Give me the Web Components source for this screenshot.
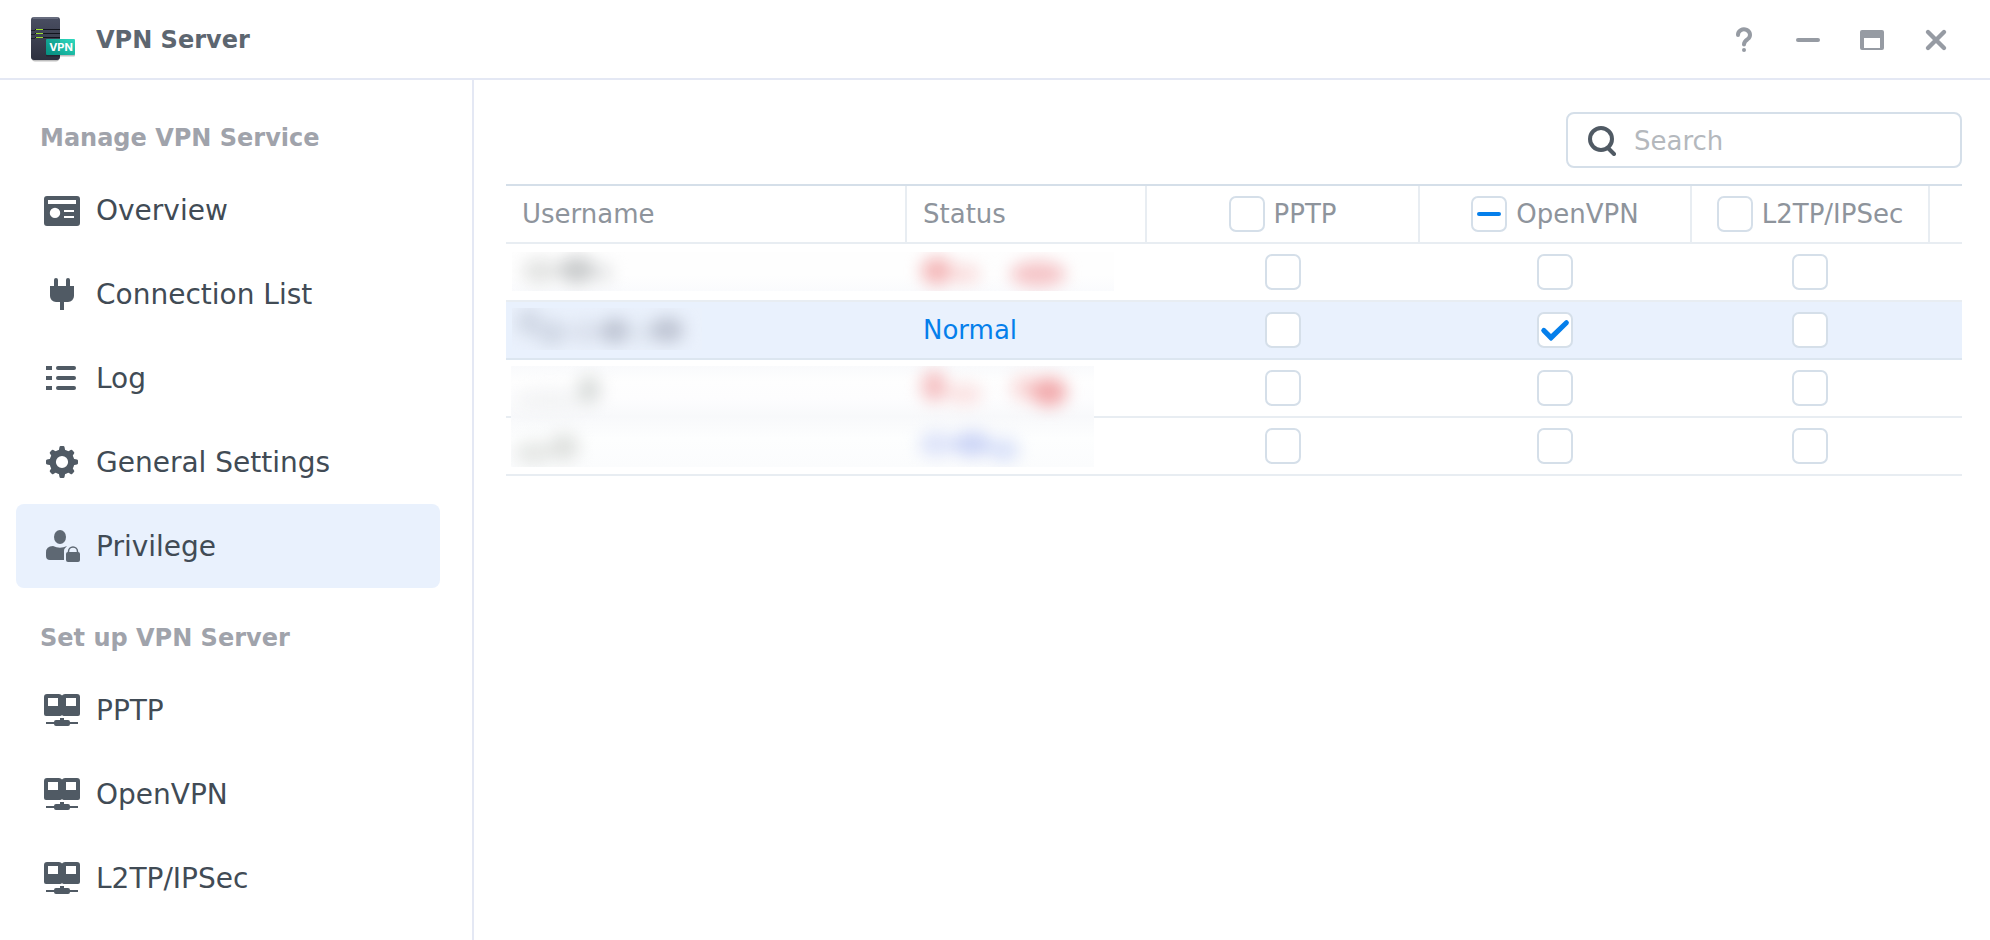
<!DOCTYPE html>
<html lang="en">
<head>
<meta charset="utf-8">
<title>VPN Server</title>
<style>
  html, body {
    height: 100%;
  }
  body {
    margin: 0;
    background: #fff;
    color: #414b55;
    font-family: Verdana, "DejaVu Sans", sans-serif;
    font-size: 28px;
    --line: #e4e8f4;
    --grid: #e8edf2;
    --field: #d5dfe9;
    --muted: #a0a3ab;
    --accent: #057feb;
    --selected: #e9f1fd;
  }
</style>
</head>
<body>
<vpn-window>
  <title-bar slot="header">VPN Server</title-bar>
  <nav-group slot="nav" heading="Manage VPN Service">
    <nav-item icon="overview">Overview</nav-item>
    <nav-item icon="plug">Connection List</nav-item>
    <nav-item icon="list">Log</nav-item>
    <nav-item icon="gear">General Settings</nav-item>
    <nav-item icon="user" active>Privilege</nav-item>
  </nav-group>
  <nav-group slot="nav" heading="Set up VPN Server">
    <nav-item icon="screens">PPTP</nav-item>
    <nav-item icon="screens">OpenVPN</nav-item>
    <nav-item icon="screens">L2TP/IPSec</nav-item>
  </nav-group>
  <search-field placeholder="Search"></search-field>
  <privilege-table></privilege-table>
</vpn-window>

<script>
const ICONS = {
  overview: `
    <path fill-rule="evenodd" d="M3 4h30a3 3 0 0 1 3 3v24a3 3 0 0 1-3 3H3a3 3 0 0 1-3-3V7a3 3 0 0 1 3-3z
      M4 8v4h28V8z M11 15.7a5.2 5.2 0 1 0 0 10.4a5.2 5.2 0 1 0 0-10.4z M20 18v2h10v-2z M20 24v2h10v-2z"/>`,
  plug: `
    <rect x="10" y="2" width="4" height="12" rx="2"/>
    <rect x="22" y="2" width="4" height="12" rx="2"/>
    <path d="M6 10h24v10a6 6 0 0 1-6 6h-4v8h-4v-8h-4a6 6 0 0 1-6-6z"/>`,
  list: `
    <path d="M2 6h6v4H2z M2 16h6v4H2z M2 26h6v4H2z"/>
    <rect x="12" y="6" width="20" height="4" rx="2"/>
    <rect x="12" y="16" width="20" height="4" rx="2"/>
    <rect x="12" y="26" width="20" height="4" rx="2"/>`,
  gear: `
    <circle cx="18" cy="18" r="9.300" fill="none" stroke="currentColor" stroke-width="6.400"/>
    <path d="M14.500 8l1-5q.2-1 1.200-1h2.600q1 0 1.200 1l1 5z"/>
    <path d="M14.500 28l1 5q.2 1 1.200 1h2.600q1 0 1.200-1l1-5z"/>
    <path d="M8 14.500l-5 1q-1 .2-1 1.200v2.600q0 1 1 1.200l5 1z"/>
    <path d="M28 14.500l5 1q1 .2 1 1.200v2.600q0 1-1 1.200l-5 1z"/>
    <g transform="rotate(45 18 18)">
      <path d="M14.500 8l1-4.600q.2-1 1.200-1h2.600q1 0 1.200 1l1 4.600z"/>
      <path d="M14.500 28l1 4.600q.2 1 1.200 1h2.600q1 0 1.200-1l1-4.600z"/>
      <path d="M8 14.500l-4.600 1q-1 .2-1 1.200v2.600q0 1 1 1.200l4.600 1z"/>
      <path d="M28 14.500l4.600 1q1 .2 1 1.200v2.600q0 1-1 1.200l-4.600 1z"/>
    </g>`,
  user: `
    <ellipse cx="16" cy="9" rx="6" ry="7"/>
    <path d="M9 18q7 3.500 14 0q-3 2.500-3 5v9H6q-4 0-4-4v-3.500Q2 18 9 18z"/>
    <rect x="22" y="24" width="14" height="10" rx="2"/>
    <path d="M24.500 25v-1.500a4.500 4.500 0 0 1 9 0V25" fill="none" stroke="currentColor" stroke-width="1.500"/>`,
  screens: `
    <path fill-rule="evenodd" d="M3 2h12q2 0 3 1.500Q19 2 21 2h12q3 0 3 3v17q0 2-2 2H20q-1.500 0-2-1q-.5 1-2 1H2q-2 0-2-2V5q0-3 3-3z
      M4 6v8h10V6z M22 6v8h10V6z"/>
    <path d="M16 26h4v2h4q2 0 2 2h8v2h-8q0 2-2 2H12q-2 0-2-2H2v-2h8q0-2 2-2h4z"/>`
};

class VpnWindow extends HTMLElement {
  constructor() {
    super();
    this.attachShadow({ mode: 'open' });
  }

  connectedCallback() {
    this.shadowRoot.innerHTML = `
      <style>
        :host {
          display: flex;
          flex-direction: column;
          min-height: 100%;
        }
        .body {
          display: flex;
          flex: 1;
        }
        nav {
          box-sizing: border-box;
          width: 474px;
          flex: none;
          padding: 8px 32px 0 16px;
          border-right: 2px solid var(--line);
        }
        main {
          flex: 1;
          min-width: 0;
          display: flex;
          flex-direction: column;
          gap: 16px;
          padding: 32px 28px 0 32px;
        }
      </style>
      <slot name="header"></slot>
      <div class="body">
        <nav><slot name="nav"></slot></nav>
        <main><slot></slot></main>
      </div>
    `;
  }
}

class TitleBar extends HTMLElement {
  constructor() {
    super();
    this.attachShadow({ mode: 'open' });
  }

  connectedCallback() {
    this.shadowRoot.innerHTML = `
      <style>
        :host {
          display: block;
          border-bottom: 2px solid var(--line);
        }
        header {
          box-sizing: border-box;
          display: flex;
          align-items: center;
          height: 78px;
          padding: 2px 38px 0 28px;
        }
        .logo {
          width: 48px;
          height: 48px;
          margin-right: 20px;
        }
        h1 {
          margin: 0;
          flex: 1;
          font-size: 24px;
          line-height: 32px;
          color: #5d6670;
        }
        .controls {
          display: flex;
          gap: 32px;
        }
        button {
          width: 32px;
          height: 32px;
          padding: 0;
          border: none;
          background: none;
          color: #969ba3;
          cursor: pointer;
        }
        button svg {
          display: block;
          width: 32px;
          height: 32px;
        }
      </style>
      <header>
        <svg class="logo" viewBox="28 16 48 48">
          <defs>
            <linearGradient id="case" x1="0" y1="0" x2="0" y2="1">
              <stop offset="0" stop-color="#4a4f62"/>
              <stop offset="1" stop-color="#2d303f"/>
            </linearGradient>
            <linearGradient id="badge" x1="0" y1="1" x2="1" y2="0">
              <stop offset="0" stop-color="#089b8b"/>
              <stop offset="1" stop-color="#2fd9be"/>
            </linearGradient>
          </defs>
          <rect x="32" y="19" width="27" height="42.500" rx="3" fill="#000" opacity=".25"/>
          <rect x="31" y="17" width="29" height="43" rx="3" fill="url(#case)"/>
          <path d="M33 18h25" stroke="#858a9b" stroke-width="1"/>
          <path d="M31 30.500h4M31 34.500h4M31 38.500h4" stroke="#1d202c"/>
          <path d="M35 29.500h25M35 33.500h25M35 37.500h25" stroke="#12141d"/>
          <path d="M36 29.500h7M36 33.500h7M36 37.500h7" stroke="#9be02f"/>
          <rect x="46" y="40.500" width="29" height="16" rx="1" fill="#000" opacity=".25"/>
          <rect x="46" y="39" width="29" height="16" rx="1" fill="url(#badge)"/>
          <path d="M46 39h14v16H46z" fill="#00695f" opacity=".25"/>
          <text x="61" y="51" text-anchor="middle" font-family="Inter, sans-serif" font-weight="700" font-size="11" fill="#fff">VPN</text>
        </svg>
        <h1><slot></slot></h1>
        <div class="controls">
          <button aria-label="Help"><svg viewBox="0 1 32 32" fill="none" stroke="currentColor" stroke-width="4" stroke-linecap="round">
            <path d="M10 12a6 5.500 0 1 1 9.600 4.200Q16 18.500 16 21.500"/><circle cx="16" cy="27" r="2" fill="currentColor" stroke="none"/></svg></button>
          <button aria-label="Minimize"><svg viewBox="0 1 32 32"><rect x="4" y="15" width="24" height="4" rx="2" fill="currentColor"/></svg></button>
          <button aria-label="Maximize"><svg viewBox="0 1 32 32"><path fill="currentColor" fill-rule="evenodd" d="M6 7h20a2 2 0 0 1 2 2v16a2 2 0 0 1-2 2H6a2 2 0 0 1-2-2V9a2 2 0 0 1 2-2zM8 15v10h16V15z"/></svg></button>
          <button aria-label="Close"><svg viewBox="0 1 32 32"><path d="M8 9l16 16M24 9l-16 16" stroke="currentColor" stroke-width="4.400" stroke-linecap="round"/></svg></button>
        </div>
      </header>
    `;
  }
}

class NavGroup extends HTMLElement {
  constructor() {
    super();
    this.attachShadow({ mode: 'open' });
  }

  connectedCallback() {
    this.shadowRoot.innerHTML = `
      <style>
        :host {
          display: block;
        }
        h2 {
          margin: 0;
          padding: 20px 24px 0;
          font-size: 24px;
          line-height: 60px;
          color: var(--muted);
        }
        .items {
          display: flex;
          flex-direction: column;
        }
      </style>
      <h2>${this.getAttribute('heading')}</h2>
      <div class="items"><slot></slot></div>
    `;
  }
}

class NavItem extends HTMLElement {
  constructor() {
    super();
    this.attachShadow({ mode: 'open' });
  }

  connectedCallback() {
    this.shadowRoot.innerHTML = `
      <style>
        :host {
          display: block;
        }
        a {
          display: flex;
          align-items: center;
          gap: 16px;
          height: 84px;
          padding: 0 28px;
          border-radius: 8px;
          color: inherit;
          text-decoration: none;
          white-space: nowrap;
        }
        :host([active]) a {
          background: var(--selected);
        }
        svg {
          width: 36px;
          height: 36px;
          flex: none;
          color: #505a64;
        }
        :host([active]) svg {
          color: #5e6873;
        }
      </style>
      <a href="#"${this.hasAttribute('active') ? ' aria-current="page"' : ''}>
        <svg viewBox="0 0 36 36" fill="currentColor">${ICONS[this.getAttribute('icon')]}</svg>
        <span><slot></slot></span>
      </a>
    `;
  }
}

class SearchField extends HTMLElement {
  constructor() {
    super();
    this.attachShadow({ mode: 'open' });
  }

  connectedCallback() {
    const placeholder = this.getAttribute('placeholder');
    this.shadowRoot.innerHTML = `
      <style>
        :host {
          display: block;
          align-self: flex-end;
          width: 396px;
          max-width: 100%;
        }
        label {
          box-sizing: border-box;
          display: flex;
          align-items: center;
          gap: 18px;
          height: 56px;
          padding: 2px 20px 0;
          border: 2px solid var(--field);
          border-radius: 8px;
        }
        svg {
          flex: none;
        }
        input {
          flex: 1;
          min-width: 0;
          padding: 0;
          border: none;
          outline: none;
          background: none;
          font: inherit;
          font-size: 26px;
          color: inherit;
        }
        input::placeholder {
          color: #b4b8bd;
          opacity: 1;
        }
      </style>
      <label>
        <svg width="28" height="32" fill="none" stroke="#505a64" stroke-width="4" stroke-linecap="round">
          <circle cx="13" cy="14" r="11"/>
          <path d="M21 24l5 5" />
        </svg>
        <input type="search" placeholder="${placeholder}" aria-label="${placeholder}">
      </label>
    `;
  }
}

class PrivilegeTable extends HTMLElement {
  constructor() {
    super();
    this.attachShadow({ mode: 'open' });
    this.services = ['PPTP', 'OpenVPN', 'L2TP/IPSec'];
    this.rows = [
      { status: '', granted: [] },
      { status: 'Normal', granted: ['OpenVPN'], selected: true },
      { status: '', granted: [] },
      { status: '', granted: [] }
    ];
  }

  connectedCallback() {
    this.render();
    this.shadowRoot.querySelector('th input[name="OpenVPN"]').indeterminate = true;
  }

  renderRow(row, index) {
    const cells = this.services.map(name => `
      <td class="check"><input type="checkbox" aria-label="${name}, user ${index + 1}"${row.granted.includes(name) ? ' checked' : ''}></td>`);
    return `
      <tr${row.selected ? ' class="selected"' : ''}>
        <td></td>
        <td class="status">${row.status}</td>
        ${cells.join('')}
        <td></td>
      </tr>`;
  }

  render() {
    this.shadowRoot.innerHTML = `
      <style>
        :host {
          display: block;
          position: relative;
          font-size: 26px;
        }
        table {
          width: 100%;
          table-layout: fixed;
          border-collapse: separate;
          border-spacing: 0;
          border-top: 2px solid var(--field);
        }
        .c-status { width: 240px; }
        .c-pptp { width: 273px; }
        .c-openvpn { width: 272px; }
        .c-l2tp { width: 238px; }
        .c-rest { width: 32px; }
        th, td {
          box-sizing: border-box;
          height: 58px;
          padding: 0 16px;
          border-bottom: 2px solid var(--grid);
          text-align: left;
          white-space: nowrap;
        }
        th {
          border-right: 2px solid var(--grid);
          color: #8e949c;
          font-weight: 400;
        }
        th:last-child {
          border-right: none;
        }
        th.check {
          padding: 0;
        }
        td.check {
          padding: 0 2px 0 0;
          text-align: center;
        }
        label {
          display: flex;
          align-items: center;
          justify-content: center;
          gap: 9px;
        }
        input {
          appearance: none;
          box-sizing: border-box;
          width: 36px;
          height: 36px;
          margin: 0;
          border: 2px solid var(--field);
          border-radius: 7px;
          background: #fff;
          display: inline-grid;
          place-content: center;
          vertical-align: middle;
        }
        input:indeterminate::before {
          content: "";
          width: 24px;
          height: 4px;
          border-radius: 2px;
          background: var(--accent);
        }
        input:checked::before {
          content: "";
          width: 32px;
          height: 32px;
          background: var(--accent);
          clip-path: path("M3 18.2L10.8 26.2q1.2 1 2.4 0L29.4 10.2a2.5 2.5 0 0 0-3.5-3.5L12 20L6.500 14.600a2.500 2.500 0 0 0-3.500 3.600z");
        }
        .selected td {
          background: var(--selected);
          border-bottom-color: #dce6f0;
        }
        .status {
          color: var(--accent);
        }
        .mask {
          position: absolute;
          top: 0;
          left: 0;
          width: 612px;
          height: 292px;
          pointer-events: none;
        }
      </style>
      <table>
        <colgroup>
          <col>
          <col class="c-status">
          <col class="c-pptp">
          <col class="c-openvpn">
          <col class="c-l2tp">
          <col class="c-rest">
        </colgroup>
        <thead>
          <tr>
            <th scope="col">Username</th>
            <th scope="col">Status</th>
            ${this.services.map(name => `<th scope="col" class="check"><label><input type="checkbox" name="${name}">${name}</label></th>`).join('')}
            <th></th>
          </tr>
        </thead>
        <tbody>${this.rows.map((row, i) => this.renderRow(row, i)).join('')}</tbody>
      </table>
      <svg class="mask" viewBox="0 0 612 292" aria-hidden="true">
        <defs>
          <filter id="soft" x="-20%" y="-100%" width="140%" height="300%" color-interpolation-filters="sRGB"><feGaussianBlur stdDeviation="8"/></filter>
          <linearGradient id="fade" x1="0" y1="0" x2="0" y2="1">
            <stop offset="0" stop-color="#f9fafc"/>
            <stop offset=".16" stop-color="#fefefe"/>
            <stop offset=".32" stop-color="#fdfdfe"/>
            <stop offset=".5" stop-color="#f8f9fb"/>
            <stop offset=".72" stop-color="#fdfefe"/>
            <stop offset="1" stop-color="#fbfcfd"/>
          </linearGradient>
          <linearGradient id="fade-top" x1="0" y1="0" x2="0" y2="1">
            <stop offset=".6" stop-color="#fefefe"/>
            <stop offset="1" stop-color="#fafbfd"/>
          </linearGradient>
          <clipPath id="p1"><rect x="6" y="68" width="602" height="39"/></clipPath>
          <clipPath id="p2"><rect x="6" y="124" width="190" height="42"/></clipPath>
          <clipPath id="p3"><rect x="5" y="182" width="583" height="101"/></clipPath>
        </defs>
        <g clip-path="url(#p1)">
          <rect x="6" y="68" width="602" height="39" fill="url(#fade-top)"/>
          <g filter="url(#soft)">
            <ellipse cx="34" cy="87" rx="18" ry="13" fill="#e4e5e4"/>
            <ellipse cx="71" cy="86" rx="19" ry="14" fill="#cccecf"/>
            <ellipse cx="97" cy="89" rx="10" ry="10" fill="#e6e7e8"/>
            <ellipse cx="431" cy="87" rx="16" ry="14" fill="#f4b9ba"/>
            <ellipse cx="458" cy="90" rx="16" ry="10" fill="#f9dddd"/>
            <ellipse cx="532" cy="90" rx="28" ry="13" fill="#f5c5c8"/>
          </g>
        </g>
        <g clip-path="url(#p2)">
          <rect x="6" y="124" width="190" height="42" fill="#eaf1fc"/>
          <g filter="url(#soft)">
            <ellipse cx="23" cy="138" rx="13" ry="14" fill="#d2d9e6"/>
            <ellipse cx="46" cy="149" rx="16" ry="13" fill="#d2d9e6"/>
            <ellipse cx="80" cy="148" rx="16" ry="12" fill="#dbe1ed"/>
            <ellipse cx="109" cy="147" rx="15" ry="13" fill="#c0c6d4"/>
            <ellipse cx="136" cy="149" rx="15" ry="11" fill="#dfe6f1"/>
            <ellipse cx="161" cy="146" rx="17" ry="13" fill="#c0c6d4"/>
          </g>
        </g>
        <g clip-path="url(#p3)">
          <rect x="5" y="182" width="583" height="101" fill="url(#fade)"/>
          <g filter="url(#soft)">
            <ellipse cx="44" cy="217" rx="36" ry="12" fill="#f3f4f5"/>
            <ellipse cx="83" cy="206" rx="12" ry="15" fill="#dcdfde"/>
            <ellipse cx="428" cy="202" rx="13" ry="16" fill="#f5c3c5"/>
            <ellipse cx="458" cy="210" rx="18" ry="11" fill="#fae2e2"/>
            <ellipse cx="520" cy="204" rx="15" ry="13" fill="#f9dada"/>
            <ellipse cx="543" cy="208" rx="18" ry="15" fill="#f2adaf"/>
            <ellipse cx="28" cy="269" rx="19" ry="12" fill="#e6e8e6"/>
            <ellipse cx="58" cy="263" rx="15" ry="14" fill="#e0e2e0"/>
            <ellipse cx="430" cy="260" rx="17" ry="13" fill="#dee4f9"/>
            <ellipse cx="466" cy="260" rx="20" ry="13" fill="#cdd6f6"/>
            <ellipse cx="498" cy="266" rx="15" ry="12" fill="#dae2f9"/>
          </g>
        </g>
      </svg>
    `;
  }
}

customElements.define('vpn-window', VpnWindow);
customElements.define('title-bar', TitleBar);
customElements.define('nav-group', NavGroup);
customElements.define('nav-item', NavItem);
customElements.define('search-field', SearchField);
customElements.define('privilege-table', PrivilegeTable);
</script>
</body>
</html>
